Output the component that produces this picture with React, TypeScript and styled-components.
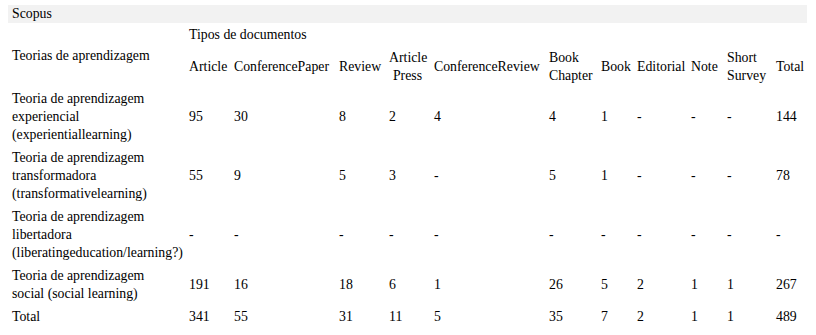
import React from "react";
import styled, { createGlobalStyle } from "styled-components";

const FONT = `"Liberation Serif", "Times New Roman", Times, serif`;

const Global = createGlobalStyle`
  html, body { margin: 0; padding: 0; background: #ffffff; }
  body {
    padding: 5px 8px;
    font-family: ${FONT};
    font-size: 13.8px;
    line-height: 18px;
    color: #000000;
  }
`;

const Table = styled.table`
  width: 799px;
  table-layout: fixed;
  border-collapse: collapse;
  border-spacing: 0;
  font-family: ${FONT};
  font-size: 13.8px;
  line-height: 18px;
  color: #000000;
`;

const Cell = styled.td<{ $align?: "left" | "center" }>`
  padding: 3px 4px 2px;
  vertical-align: middle;
  text-align: ${(p) => p.$align ?? "left"};
  white-space: nowrap;
  font-weight: normal;
`;

const TitleCell = styled.td`
  padding: 0 4px;
  height: 18px;
  background: #f2f2f2;
  vertical-align: middle;
  text-align: left;
`;

const HeadCell = styled(Cell).attrs({ as: "th" })``;

const widths = [177, 45, 105, 50, 45, 115, 52, 36, 54, 36, 49, 35];

const columns: { label: React.ReactNode; align?: "left" | "center" }[] = [
  { label: "Article" },
  { label: "ConferencePaper" },
  { label: "Review" },
  { label: <>Article<br />Press</>, align: "center" },
  { label: "ConferenceReview" },
  { label: <>Book<br />Chapter</> },
  { label: "Book" },
  { label: "Editorial" },
  { label: "Note" },
  { label: <>Short<br />Survey</> },
  { label: "Total" },
];

const rows: { name: string[]; values: string[] }[] = [
  {
    name: ["Teoria de aprendizagem", "experiencial", "(experientiallearning)"],
    values: ["95", "30", "8", "2", "4", "4", "1", "-", "-", "-", "144"],
  },
  {
    name: ["Teoria de aprendizagem", "transformadora", "(transformativelearning)"],
    values: ["55", "9", "5", "3", "-", "5", "1", "-", "-", "-", "78"],
  },
  {
    name: ["Teoria de aprendizagem", "libertadora", "(liberatingeducation/learning?)"],
    values: ["-", "-", "-", "-", "-", "-", "-", "-", "-", "-", "-"],
  },
  {
    name: ["Teoria de aprendizagem", "social (social learning)"],
    values: ["191", "16", "18", "6", "1", "26", "5", "2", "1", "1", "267"],
  },
  {
    name: ["Total"],
    values: ["341", "55", "31", "11", "5", "35", "7", "2", "1", "1", "489"],
  },
];

export default function App() {
  return (
    <>
      <Global />
      <Table>
        <colgroup>
          {widths.map((w, i) => (
            <col key={i} style={{ width: w }} />
          ))}
        </colgroup>
        <thead>
          <tr>
            <TitleCell colSpan={12}>Scopus</TitleCell>
          </tr>
          <tr>
            <HeadCell rowSpan={2}>Teorias de aprendizagem</HeadCell>
            <HeadCell colSpan={11}>Tipos de documentos</HeadCell>
          </tr>
          <tr>
            {columns.map((c, i) => (
              <HeadCell key={i} $align={c.align}>
                {c.label}
              </HeadCell>
            ))}
          </tr>
        </thead>
        <tbody>
          {rows.map((r, i) => (
            <tr key={i}>
              <Cell>
                {r.name.map((line, j) => (
                  <React.Fragment key={j}>
                    {j > 0 && <br />}
                    {line}
                  </React.Fragment>
                ))}
              </Cell>
              {r.values.map((v, j) => (
                <Cell key={j}>{v}</Cell>
              ))}
            </tr>
          ))}
        </tbody>
      </Table>
    </>
  );
}
